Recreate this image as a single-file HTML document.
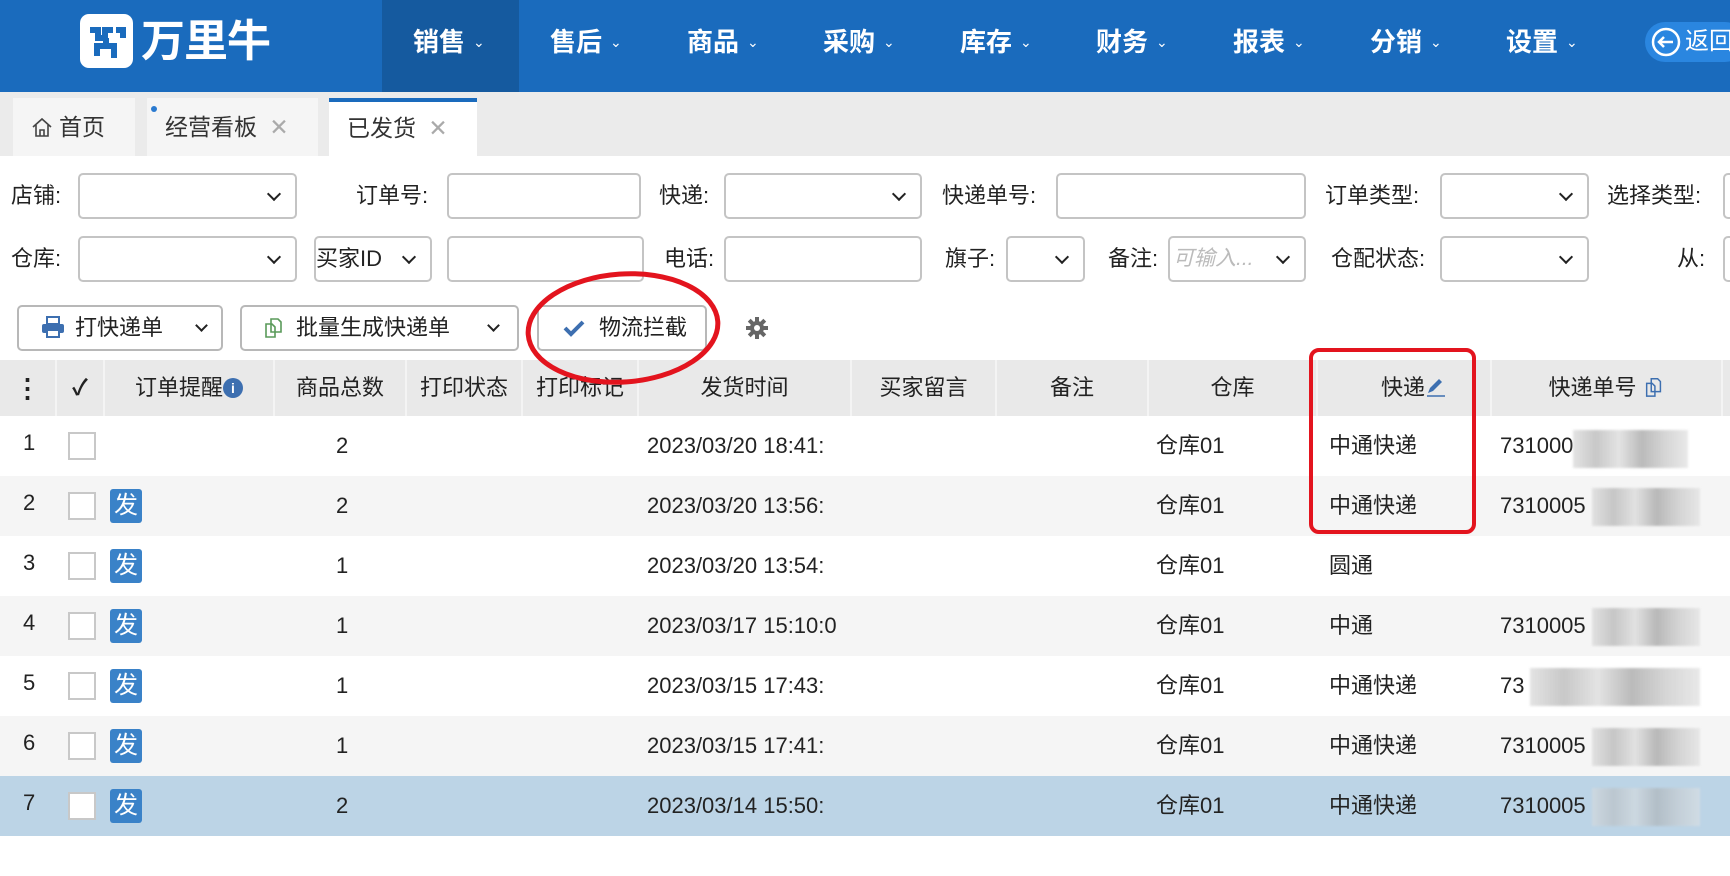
<!DOCTYPE html>
<html><head><meta charset="utf-8"><style>
*{box-sizing:border-box;margin:0;padding:0}
body{width:1730px;height:876px;overflow:hidden;background:#fff;font-family:"Liberation Sans","Noto Sans CJK SC",sans-serif;color:#222;position:relative}
.a{position:absolute}
.hdr{left:0;top:0;width:1730px;height:92px;background:#1a6bbd}
.nav{top:0;height:92px;line-height:84px;color:#fff;font-size:26px;font-weight:bold;white-space:nowrap}
.nav i{font-style:normal;font-weight:normal;font-size:14px;margin-left:8px;position:relative;top:-4px}
.tabbar{left:0;top:92px;width:1730px;height:64px;background:#ebebeb}
.tab{top:98px;height:58px;background:#f5f5f5;font-size:23px;line-height:58px;color:#333;padding-left:18px;white-space:nowrap}
.lbl{font-size:22px;line-height:45px;color:#222;white-space:nowrap}
.box{border:2px solid #c4c4c4;border-radius:5px;background:#fff;height:46px}
.sel::after{content:"";position:absolute;right:16px;top:14px;width:8px;height:8px;border-right:2.5px solid #222;border-bottom:2.5px solid #222;transform:rotate(45deg)}
.btn{border:2px solid #b8b8b8;border-radius:5px;height:46px;top:305px;font-size:22px;line-height:42px;background:#fff;white-space:nowrap}
.th{top:360px;height:56px;background:#e9e9e9;width:1730px;left:0}
.thc{top:360px;height:56px;line-height:56px;font-size:22px;text-align:center;color:#222;border-right:2px solid #f4f4f4;white-space:nowrap}
.row{left:0;width:1730px;height:60px}
.c{font-size:22px;line-height:60px;white-space:nowrap}
.cb{width:28px;height:28px;border:2px solid #c8c8c8;background:#fff;left:68px}
.fa{left:110px;width:32px;height:34px;background:#3a82c8;color:#fff;border-radius:3px;font-size:24px;line-height:34px;text-align:center}
.blur{height:38px;background:linear-gradient(90deg,#ddd,#bbb 20%,#ddd 40%,#aaa 60%,#ccc 80%,#e4e4e4);opacity:.8;filter:blur(1px)}
</style></head><body>
<div class="a hdr"></div>
<div class="a" style="left:382px;top:0;width:137px;height:92px;background:#155a9f"></div>
<div class="a" style="left:80px;top:14px;width:53px;height:54px;background:#fff;border-radius:9px"></div>
<svg class="a" style="left:80px;top:14px" width="53" height="54" viewBox="0 0 53 54"><path d="M10 16h8v8h7v-8h8M36 16h7v8M26 24v8h-9v10M26 32h8v12" stroke="#1a6bbd" stroke-width="6" fill="none"/></svg>
<div class="a" style="left:141px;top:10px;color:#fff;font-size:44px;font-weight:bold;line-height:64px;letter-spacing:-1px;white-space:nowrap">万里牛</div>
<div class="a nav" style="left:413px">销售<i>⌄</i></div>
<div class="a nav" style="left:550px">售后<i>⌄</i></div>
<div class="a nav" style="left:687px">商品<i>⌄</i></div>
<div class="a nav" style="left:823px">采购<i>⌄</i></div>
<div class="a nav" style="left:960px">库存<i>⌄</i></div>
<div class="a nav" style="left:1096px">财务<i>⌄</i></div>
<div class="a nav" style="left:1233px">报表<i>⌄</i></div>
<div class="a nav" style="left:1370px">分销<i>⌄</i></div>
<div class="a nav" style="left:1506px">设置<i>⌄</i></div>
<div class="a" style="left:1645px;top:22px;width:100px;height:40px;background:#2a86e0;border-radius:20px"></div>
<svg class="a" style="left:1650px;top:26px" width="32" height="32"><circle cx="16" cy="16" r="13" stroke="#fff" stroke-width="2.5" fill="none"/><path d="M9 16h14M14 11l-5 5 5 5" stroke="#fff" stroke-width="2.5" fill="none"/></svg>
<div class="a" style="left:1685px;top:22px;color:#fff;font-size:24px;line-height:40px;white-space:nowrap">返回</div>

<div class="a tabbar"></div>
<div class="a tab" style="left:13px;width:122px">
<svg width="22" height="22" style="vertical-align:-3px;margin-right:6px" viewBox="0 0 22 22"><path d="M2 11L11 3l9 8M5 9v11h12V9M9 20v-6h4v6" stroke="#444" stroke-width="1.6" fill="none"/></svg>首页</div>
<div class="a tab" style="left:147px;width:171px">经营看板 <span style="color:#aaa;margin-left:6px">✕</span></div>
<div class="a" style="left:151px;top:106px;width:6px;height:6px;border-radius:3px;background:#2a7ad0"></div>
<div class="a tab" style="left:329px;width:148px;background:#fff;border-top:4px solid #1a6bbd;line-height:52px">已发货 <span style="color:#aaa;margin-left:6px">✕</span></div>

<div class="a lbl" style="left:11px;top:173px">店铺:</div>
<div class="a box sel" style="left:78px;top:173px;width:219px"></div>
<div class="a lbl" style="left:356px;top:173px">订单号:</div>
<div class="a box" style="left:447px;top:173px;width:194px"></div>
<div class="a lbl" style="left:659px;top:173px">快递:</div>
<div class="a box sel" style="left:724px;top:173px;width:198px"></div>
<div class="a lbl" style="left:942px;top:173px">快递单号:</div>
<div class="a box" style="left:1056px;top:173px;width:250px"></div>
<div class="a lbl" style="left:1325px;top:173px">订单类型:</div>
<div class="a box sel" style="left:1440px;top:173px;width:149px"></div>
<div class="a lbl" style="left:1607px;top:173px">选择类型:</div>
<div class="a box" style="left:1723px;top:173px;width:20px"></div>

<div class="a lbl" style="left:11px;top:236px">仓库:</div>
<div class="a box sel" style="left:78px;top:236px;width:219px"></div>
<div class="a box sel" style="left:314px;top:236px;width:118px;font-size:22px;line-height:42px">买家ID</div>
<div class="a box" style="left:447px;top:236px;width:197px"></div>
<div class="a lbl" style="left:664px;top:236px">电话:</div>
<div class="a box" style="left:724px;top:236px;width:198px"></div>
<div class="a lbl" style="left:945px;top:236px">旗子:</div>
<div class="a box sel" style="left:1006px;top:236px;width:79px"></div>
<div class="a lbl" style="left:1108px;top:236px">备注:</div>
<div class="a box sel" style="left:1168px;top:236px;width:138px;font-size:21px;line-height:42px;color:#bbb;font-style:italic;padding-left:3px">可输入...</div>
<div class="a lbl" style="left:1331px;top:236px">仓配状态:</div>
<div class="a box sel" style="left:1440px;top:236px;width:149px"></div>
<div class="a lbl" style="left:1677px;top:236px">从:</div>
<div class="a box" style="left:1723px;top:236px;width:20px"></div>

<div class="a btn" style="left:17px;width:206px;padding-left:22px">
<svg width="24" height="22" style="vertical-align:-3px;margin-right:10px" viewBox="0 0 24 22"><rect x="6" y="1" width="12" height="7" fill="none" stroke="#3d6fb0" stroke-width="2"/><rect x="1" y="8" width="22" height="9" rx="2" fill="#3d6fb0"/><rect x="6" y="14" width="12" height="7" fill="#fff" stroke="#3d6fb0" stroke-width="2"/></svg>打快递单</div>
<div class="a" style="left:197px;top:321px;width:9px;height:9px;border-right:2.5px solid #222;border-bottom:2.5px solid #222;transform:rotate(45deg)"></div>
<div class="a btn" style="left:240px;width:279px;padding-left:20px">
<svg width="24" height="24" style="vertical-align:-4px;margin-right:10px" viewBox="0 0 24 24"><path d="M9 4h7l3 3v10H9z M4 9h6l3 3v10H4z" fill="none" stroke="#5a9a5a" stroke-width="1.6"/></svg>批量生成快递单</div>
<div class="a" style="left:489px;top:321px;width:9px;height:9px;border-right:2.5px solid #222;border-bottom:2.5px solid #222;transform:rotate(45deg)"></div>
<div class="a btn" style="left:537px;width:170px;padding-left:24px">
<svg width="22" height="18" style="vertical-align:-2px;margin-right:14px" viewBox="0 0 22 18"><path d="M2 9l6 6L20 3" stroke="#3d6fb0" stroke-width="4" fill="none"/></svg>物流拦截</div>
<svg class="a" style="left:745px;top:316px" width="24" height="24" viewBox="0 0 24 24"><g fill="#666"><circle cx="12" cy="12" r="7"/><rect x="10" y="1" width="4" height="22"/><rect x="1" y="10" width="22" height="4"/><rect x="10" y="1" width="4" height="22" transform="rotate(45 12 12)"/><rect x="10" y="1" width="4" height="22" transform="rotate(-45 12 12)"/></g><circle cx="12" cy="12" r="3" fill="#fff"/></svg>

<div class="a th"></div>
<div class="a thc" style="left:0;width:57px;font-weight:bold;font-size:26px">⋮</div>
<div class="a thc" style="left:57px;width:48px;font-weight:bold">✓</div>
<div class="a thc" style="left:105px;width:170px">订单提醒<span style="display:inline-block;width:20px;height:20px;border-radius:10px;background:#3d6fb0;color:#fff;font-size:14px;line-height:20px;font-weight:bold;vertical-align:2px">i</span></div>
<div class="a thc" style="left:275px;width:132px">商品总数</div>
<div class="a thc" style="left:407px;width:116px">打印状态</div>
<div class="a thc" style="left:523px;width:116px">打印标记</div>
<div class="a thc" style="left:639px;width:213px">发货时间</div>
<div class="a thc" style="left:852px;width:145px">买家留言</div>
<div class="a thc" style="left:997px;width:152px">备注</div>
<div class="a thc" style="left:1149px;width:169px">仓库</div>
<div class="a thc" style="left:1318px;width:174px;padding-left:20px">快递<svg width="22" height="22" viewBox="0 0 22 22" style="vertical-align:-3px"><path d="M3 17l2-5 9-9 3 3-9 9z" fill="#3d6fb0"/><path d="M2 20h18" stroke="#3d6fb0" stroke-width="1.5"/></svg></div>
<div class="a thc" style="left:1492px;width:231px">快递单号 <svg width="22" height="22" viewBox="0 0 24 24" style="vertical-align:-3px"><path d="M9 3h7l3 3v11H9z M4 8h6l3 3v11H4z" fill="none" stroke="#3d6fb0" stroke-width="1.6"/></svg></div>

<div class="a row" style="top:416px;background:#fff"></div>
<div class="a row" style="top:476px;background:#f5f5f5"></div>
<div class="a row" style="top:536px;background:#fff"></div>
<div class="a row" style="top:596px;background:#f5f5f5"></div>
<div class="a row" style="top:656px;background:#fff"></div>
<div class="a row" style="top:716px;background:#f5f5f5"></div>
<div class="a row" style="top:776px;background:#bcd4e6"></div>

<div class="a" style="top:416px;left:0;width:1730px">
<div style="position:relative;height:60px">
<div class="a c" style="left:23px;top:-3px">1</div><div class="a cb" style="top:16px"></div>
<div class="a c" style="left:336px">2</div><div class="a c" style="left:647px;width:205px;overflow:hidden">2023/03/20 18:41:</div>
<div class="a c" style="left:1156px">仓库01</div><div class="a c" style="left:1329px">中通快递</div>
<div class="a c" style="left:1500px;width:76px;overflow:hidden">731000</div><div class="a blur" style="left:1573px;top:14px;width:115px"></div>
</div>
<div style="position:relative;height:60px">
<div class="a c" style="left:23px;top:-3px">2</div><div class="a cb" style="top:16px"></div><div class="a fa" style="top:13px">发</div>
<div class="a c" style="left:336px">2</div><div class="a c" style="left:647px;width:205px;overflow:hidden">2023/03/20 13:56:</div>
<div class="a c" style="left:1156px">仓库01</div><div class="a c" style="left:1329px">中通快递</div>
<div class="a c" style="left:1500px">7310005</div><div class="a blur" style="left:1592px;top:12px;width:108px"></div>
</div>
<div style="position:relative;height:60px">
<div class="a c" style="left:23px;top:-3px">3</div><div class="a cb" style="top:16px"></div><div class="a fa" style="top:13px">发</div>
<div class="a c" style="left:336px">1</div><div class="a c" style="left:647px;width:205px;overflow:hidden">2023/03/20 13:54:</div>
<div class="a c" style="left:1156px">仓库01</div><div class="a c" style="left:1329px">圆通</div>
</div>
<div style="position:relative;height:60px">
<div class="a c" style="left:23px;top:-3px">4</div><div class="a cb" style="top:16px"></div><div class="a fa" style="top:13px">发</div>
<div class="a c" style="left:336px">1</div><div class="a c" style="left:647px;width:205px;overflow:hidden">2023/03/17 15:10:0</div>
<div class="a c" style="left:1156px">仓库01</div><div class="a c" style="left:1329px">中通</div>
<div class="a c" style="left:1500px">7310005</div><div class="a blur" style="left:1592px;top:12px;width:108px"></div>
</div>
<div style="position:relative;height:60px">
<div class="a c" style="left:23px;top:-3px">5</div><div class="a cb" style="top:16px"></div><div class="a fa" style="top:13px">发</div>
<div class="a c" style="left:336px">1</div><div class="a c" style="left:647px;width:205px;overflow:hidden">2023/03/15 17:43:</div>
<div class="a c" style="left:1156px">仓库01</div><div class="a c" style="left:1329px">中通快递</div>
<div class="a c" style="left:1500px">73</div><div class="a blur" style="left:1530px;top:12px;width:170px"></div>
</div>
<div style="position:relative;height:60px">
<div class="a c" style="left:23px;top:-3px">6</div><div class="a cb" style="top:16px"></div><div class="a fa" style="top:13px">发</div>
<div class="a c" style="left:336px">1</div><div class="a c" style="left:647px;width:205px;overflow:hidden">2023/03/15 17:41:</div>
<div class="a c" style="left:1156px">仓库01</div><div class="a c" style="left:1329px">中通快递</div>
<div class="a c" style="left:1500px">7310005</div><div class="a blur" style="left:1592px;top:12px;width:108px"></div>
</div>
<div style="position:relative;height:60px">
<div class="a c" style="left:23px;top:-3px">7</div><div class="a cb" style="top:16px"></div><div class="a fa" style="top:13px">发</div>
<div class="a c" style="left:336px">2</div><div class="a c" style="left:647px;width:205px;overflow:hidden">2023/03/14 15:50:</div>
<div class="a c" style="left:1156px">仓库01</div><div class="a c" style="left:1329px">中通快递</div>
<div class="a c" style="left:1500px">7310005</div><div class="a blur" style="left:1592px;top:12px;width:108px;opacity:.5"></div>
</div>
</div>

<svg class="a" style="left:0;top:0" width="1730" height="876">
<ellipse cx="623" cy="328" rx="95" ry="54" transform="rotate(-4 623 328)" fill="none" stroke="#e3141e" stroke-width="5"/>
<rect x="1311" y="350" width="163" height="182" rx="8" fill="none" stroke="#e3141e" stroke-width="4"/>
</svg>
</body></html>
